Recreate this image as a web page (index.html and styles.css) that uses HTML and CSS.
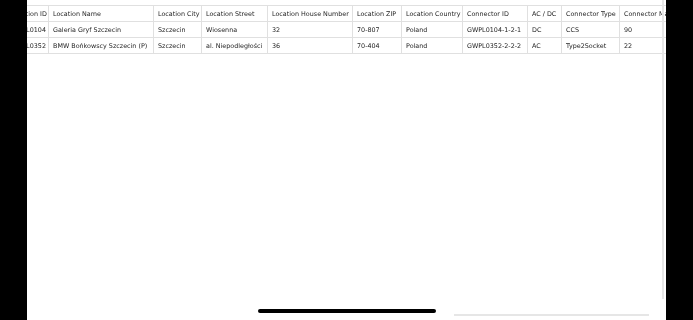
FILE: index.html
```html
<!DOCTYPE html>
<html>
<head>
<meta charset="utf-8">
<link rel="stylesheet" href="styles.css">
</head>
<body>
<div class="screen">
  <div class="bezel"></div>
  <main class="view">
    <div class="scroller">
      <table class="grid">
        <colgroup>
          <col class="c-id"><col class="c-name"><col class="c-city"><col class="c-street"><col class="c-house"><col class="c-zip"><col class="c-country"><col class="c-conn"><col class="c-acdc"><col class="c-type"><col class="c-max">
        </colgroup>
        <thead>
          <tr><th>Location ID</th><th>Location Name</th><th>Location City</th><th>Location Street</th><th>Location House Number</th><th>Location ZIP</th><th>Location Country</th><th>Connector ID</th><th>AC / DC</th><th>Connector Type</th><th>Connector Max Power</th></tr>
        </thead>
        <tbody>
          <tr><td>GWPL0104</td><td>Galeria Gryf Szczecin</td><td>Szczecin</td><td>Wiosenna</td><td>32</td><td>70-807</td><td>Poland</td><td>GWPL0104-1-2-1</td><td>DC</td><td>CCS</td><td>90</td></tr>
          <tr><td>GWPL0352</td><td>BMW Bońkowscy Szczecin (P)</td><td>Szczecin</td><td>al. Niepodległości</td><td>36</td><td>70-404</td><td>Poland</td><td>GWPL0352-2-2-2</td><td>AC</td><td>Type2Socket</td><td>22</td></tr>
        </tbody>
      </table>
    </div>
    <div class="vbar"></div>
    <div class="hbar"></div>
    <div class="home"></div>
  </main>
  <div class="bezel"></div>
</div>
</body>
</html>
```
FILE: styles.css
```css
html, body {
  margin: 0;
  padding: 0;
  background: #000;
}
.screen {
  display: flex;
  width: 693px;
  height: 320px;
}
.bezel {
  width: 27px;
  flex: none;
  background: #000;
}
.view {
  position: relative;
  flex: none;
  width: 639px;
  height: 320px;
  background: #fff;
  overflow: hidden;
}
.scroller {
  overflow: hidden;
  padding-top: 5px;
}
.grid {
  border-collapse: collapse;
  table-layout: fixed;
  width: 760px;
  margin-left: -21px;
  font-family: "DejaVu Sans", Verdana, sans-serif;
  font-size: 6.4px;
  color: #1e1e1e;
  filter: grayscale(1);
}
.grid th, .grid td {
  border: 1px solid #e0e0e0;
  height: 16px;
  padding: 0 3px 0 4px;
  text-align: left;
  font-weight: normal;
  white-space: nowrap;
  overflow: hidden;
  vertical-align: middle;
  box-sizing: border-box;
}
.c-id { width: 42px; }
.c-name { width: 105px; }
.c-city { width: 48px; }
.c-street { width: 66px; }
.c-house { width: 85px; }
.c-zip { width: 49px; }
.c-country { width: 61px; }
.c-conn { width: 65px; }
.c-acdc { width: 34px; }
.c-type { width: 58px; }
.c-max { width: 147px; }
.vbar {
  position: absolute;
  left: 635px;
  top: 0;
  width: 2px;
  height: 299px;
  background: #e6e6e6;
}
.hbar {
  position: absolute;
  left: 427px;
  top: 314px;
  width: 195px;
  height: 2px;
  background: #e6e6e6;
}
.home {
  position: absolute;
  left: 231px;
  top: 309px;
  width: 178px;
  height: 4px;
  border-radius: 2px;
  background: #000;
}
```
